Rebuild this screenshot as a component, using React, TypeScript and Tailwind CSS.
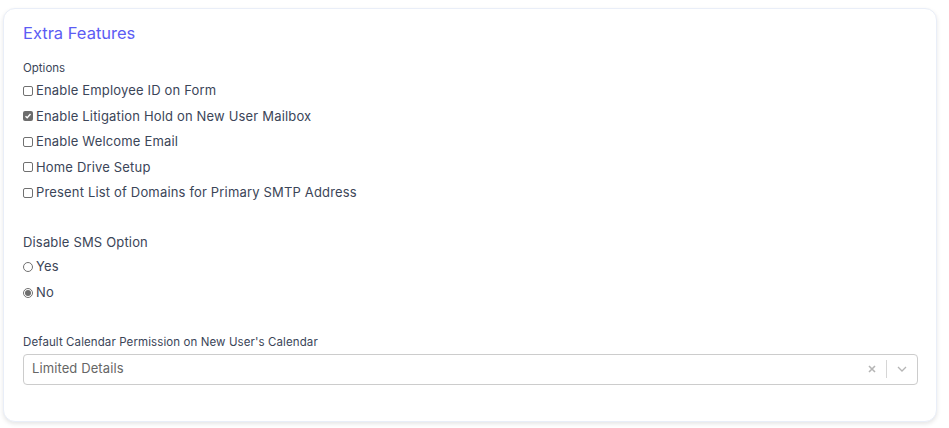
import React from "react";

const options = [
  { label: "Enable Employee ID on Form", checked: false },
  { label: "Enable Litigation Hold on New User Mailbox", checked: true },
  { label: "Enable Welcome Email", checked: false },
  { label: "Home Drive Setup", checked: false },
  { label: "Present List of Domains for Primary SMTP Address", checked: false },
];

function Box({ checked }: { checked: boolean }) {
  return checked ? (
    <span className="w-[10px] h-[10px] rounded-[2px] bg-[#6d6d6d] flex items-center justify-center shrink-0">
      <svg width="8" height="8" viewBox="0 0 8 8">
        <path d="M1.5 4.2 L3.2 5.8 L6.5 2" stroke="white" strokeWidth="1.4" fill="none" />
      </svg>
    </span>
  ) : (
    <span className="w-[10px] h-[10px] rounded-[2px] border border-[#707070] bg-white shrink-0" />
  );
}

function Radio({ checked }: { checked: boolean }) {
  return (
    <span className="w-[10px] h-[10px] rounded-full border border-[#707070] bg-white flex items-center justify-center shrink-0">
      {checked && <span className="w-[6px] h-[6px] rounded-full bg-[#6d6d6d]" />}
    </span>
  );
}

export default function App() {
  return (
    <div className="w-[949px] h-[428px] bg-white pt-2 pl-[3px] font-['Inter',sans-serif]">
      <div className="w-[934px] h-[414px] bg-white border border-[#e9eef8] rounded-xl shadow-[0_2px_4px_rgba(0,0,0,0.10)] pl-[19px] pr-[18px] pt-[12px]">
        <h2 className="text-[16.5px] leading-6 text-[#5c5cf4]">Extra Features</h2>

        {/* Options */}
        <div className="mt-[14px] text-[11.5px] leading-[18px] text-[#3b4558]">Options</div>
        <div className="mt-[1px]">
          {options.map((o) => (
            <label key={o.label} className="flex items-center gap-[3px] h-[25.5px] text-[13px] tracking-[0.17px] text-[#3b4558]">
              <Box checked={o.checked} />
              {o.label}
            </label>
          ))}
        </div>

        {/* SMS */}
        <div className="mt-[26px] text-[13px] tracking-[0.17px] leading-5 text-[#3b4558]">Disable SMS Option</div>
        <div className="mt-[2px]">
          {["Yes", "No"].map((v) => (
            <label key={v} className="flex items-center gap-[3px] h-[26px] text-[13px] tracking-[0.17px] text-[#3b4558]">
              <Radio checked={v === "No"} />
              {v}
            </label>
          ))}
        </div>

        {/* Calendar */}
        <div className="mt-[27px] text-[11.5px] leading-[18px] tracking-[0.1px] text-[#3b4558]">
          Default Calendar Permission on New User's Calendar
        </div>
        <div className="mt-[3px] h-[31px] border border-[#cccccc] rounded-[4px] flex items-center pl-[8px]">
          <span className="flex-1 text-[13px] tracking-[0.1px] text-[#666666]">Limited Details</span>
          <div className="flex items-center h-full">
            <svg width="10" height="10" viewBox="0 0 10 10" className="mr-[9px]">
              <path d="M2 2 L8 8 M8 2 L2 8" stroke="#b5b5b5" strokeWidth="1.6" />
            </svg>
            <span className="w-px h-[18px] bg-[#d6d6d6]" />
            <svg width="12" height="8" viewBox="0 0 12 8" className="mx-[9px]">
              <path d="M2 2 L6 6 L10 2" stroke="#b5b5b5" strokeWidth="1.3" fill="none" />
            </svg>
          </div>
        </div>
      </div>
    </div>
  );
}
